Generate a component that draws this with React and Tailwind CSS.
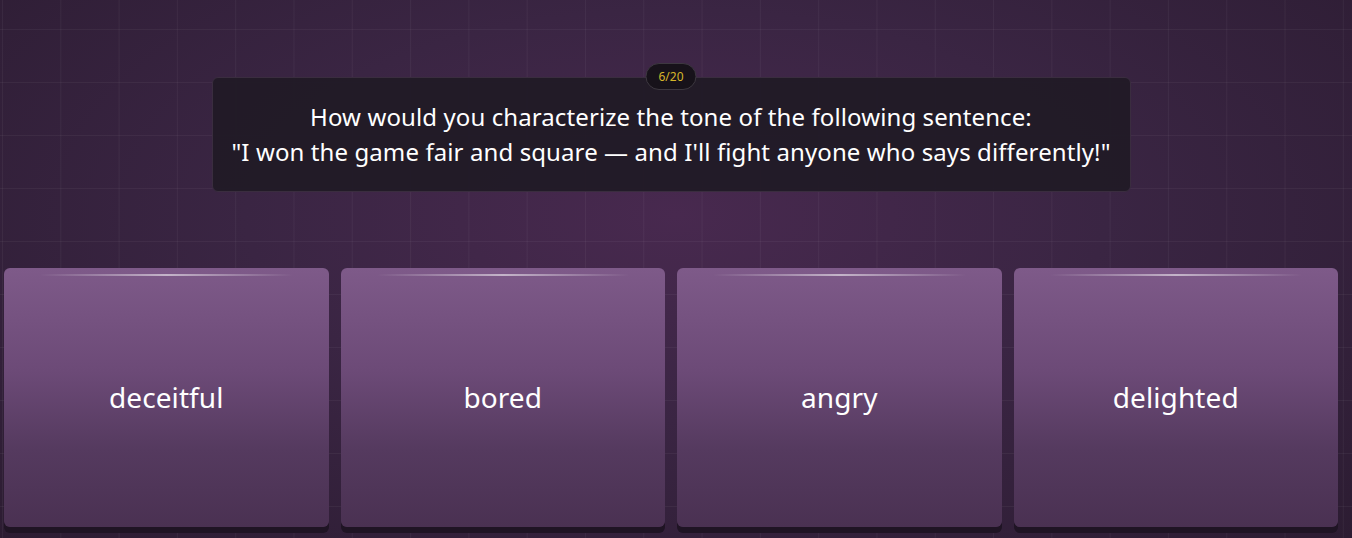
const answers = ['deceitful', 'bored', 'angry', 'delighted'];

const App = () => {
  return (
    <div className="relative w-[1352px] h-[538px] overflow-hidden bg-[#34213b] font-['Noto_Sans',sans-serif]">
      {/* background glow */}
      <div className="absolute inset-0 bg-[radial-gradient(ellipse_at_50%_40%,#48294f_0%,#3a2543_45%,#2c1c32_100%)]" />
      {/* grid */}
      <div className="absolute inset-0 bg-[linear-gradient(to_right,rgba(255,255,255,0.045)_1px,transparent_1px),linear-gradient(to_bottom,rgba(255,255,255,0.045)_1px,transparent_1px)] bg-[size:58.3px_53px] bg-[position:2px_29px]" />

      <div className="relative flex flex-col h-full">
        {/* question */}
        <div className="pt-[77px] pr-[10px] flex justify-center">
          <div className="relative w-[919px] h-[115px] rounded-md bg-[#211a26]/95 border border-[#3a2d3f] flex flex-col items-center justify-center pb-[2px]">
            <div className="absolute -top-[15px] left-1/2 -translate-x-1/2 h-[27px] px-[12px] rounded-full bg-[#17121a] border border-[#3d3840] flex items-center text-[12px] text-[#d6b62a]">
              6/20
            </div>
            <p className="text-white text-[24px] leading-[35px] text-center tracking-[0.1px]">
              How would you characterize the tone of the following sentence:
            </p>
            <p className="text-white text-[24px] leading-[35px] text-center tracking-[0.1px]">
              "I won the game fair and square — and I'll fight anyone who says differently!"
            </p>
          </div>
        </div>

        {/* answers */}
        <div className="mt-[76px] pl-[4px] pr-[14px] grid grid-cols-4 gap-[12px]">
          {answers.map((a) => (
            <div
              key={a}
              className="relative h-[259px] rounded-[6px] bg-[linear-gradient(to_bottom,#7e5a89_0%,#6c4a77_40%,#553a5f_70%,#4a3152_100%)] shadow-[0_6px_0_#1f1424] flex items-center justify-center"
            >
              <div className="absolute top-[6px] left-[36px] right-[36px] h-[2px] bg-[linear-gradient(to_right,transparent,rgba(255,255,255,0.55),transparent)]" />
              <span className="text-white text-[28px] tracking-[0.1px] -mt-[2px]">{a}</span>
            </div>
          ))}
        </div>
      </div>
    </div>
  );
};

export default App;
